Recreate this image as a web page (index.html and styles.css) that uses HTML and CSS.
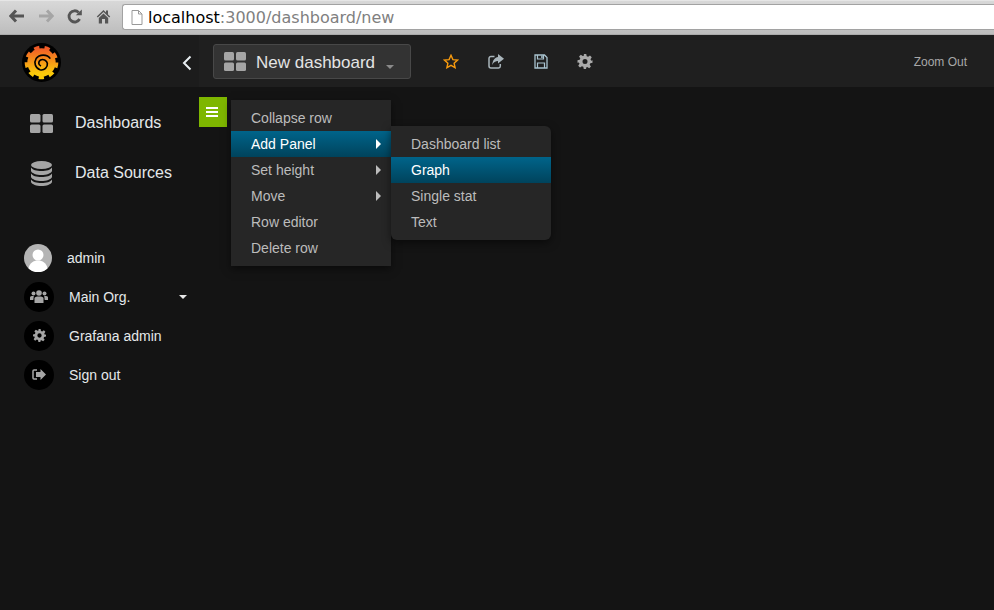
FILE: index.html
```html
<!DOCTYPE html>
<html lang="en">
<head>
  <meta charset="UTF-8" />
  <title>Grafana - New dashboard</title>
  <link rel="stylesheet" href="styles.css">
</head>
<body>

  <!-- browser toolbar -->
  <div class="browser-bar">
    <div class="browser-btns">
      <svg class="b-back" width="16" height="14" viewBox="0 0 16 14"><path d="M7 1.500 1.800 7 7 12.500M2 7h13" fill="none" stroke="#555" stroke-width="3"/></svg>
      <svg class="b-fwd" width="16" height="14" viewBox="0 0 16 14"><path d="M9 1.500 14.200 7 9 12.500M14 7H1" fill="none" stroke="#a5a5a5" stroke-width="3"/></svg>
      <svg class="b-reload" width="15" height="15" viewBox="0 0 15 15"><path d="M12.600 10A5.600 5.600 0 1 1 11.600 3.400" fill="none" stroke="#555" stroke-width="2.800"/><path d="M8.800 6.200h6V.4z" fill="#555"/></svg>
      <svg class="b-home" width="15" height="15" viewBox="0 0 15 15"><path d="M7.500 1 0.800 7.600l1 1L7.500 3l5.700 5.600 1-1-2.200-2.200V1.600H10v1.900z" fill="#555"/><path d="M2.800 9 7.500 4.400 12.200 9v5.500H9V10H6v4.500H2.800z" fill="#555"/></svg>
    </div>
    <div class="url-box">
      <svg width="12" height="15" viewBox="0 0 12 15"><path d="M1 .5h6.500L11 4v10.500H1z" fill="#fff" stroke="#999"/><path d="M7.500.5V4H11" fill="none" stroke="#999"/></svg>
      <span class="url-text"><b>localhost</b>:3000/dashboard/new</span>
    </div>
  </div>

  <!-- top nav -->
  <div class="navbar">
    <div class="brand">
      <svg class="logo" width="39" height="39" viewBox="0 0 40 40">
        <defs>
          <linearGradient id="logoGrad" gradientUnits="userSpaceOnUse" x1="0" y1="5" x2="0" y2="31">
            <stop offset="0" stop-color="#f05a28"/>
            <stop offset="1" stop-color="#fbca0a"/>
          </linearGradient>
        </defs>
        <circle cx="20" cy="20" r="20" fill="#000"/>
        <circle cx="20" cy="20" r="14.500" fill="url(#logoGrad)"/>
        <circle cx="20" cy="20" r="15.500" fill="none" stroke="url(#logoGrad)" stroke-width="3.500" stroke-dasharray="5.410 5.410"/>
        <path d="M29 16C26 11.500 18 11 14.500 16C12 20 13.500 26 18.500 27.500C23 28.500 26.500 25 26 21C25.500 17.500 21.500 16 19 17.500C16.500 19 16.500 22.500 19.500 23.500" fill="none" stroke="#000" stroke-width="1.700"/>
      </svg>
      <svg class="collapse" width="10" height="16" viewBox="0 0 10 16"><path d="M8.500 1.500 2 8l6.500 6.500" fill="none" stroke="#e8eef2" stroke-width="2"/></svg>
    </div>
    <div class="nav-main">
      <div class="dash-btn">
        <svg width="22" height="19" viewBox="0 0 22 19"><g fill="#a5a5a5"><rect width="10" height="8.500" rx="1.500"/><rect x="12" width="10" height="8.500" rx="1.500"/><rect y="10.500" width="10" height="8.500" rx="1.500"/><rect x="12" y="10.500" width="10" height="8.500" rx="1.500"/></g></svg>
        <span class="dash-title">New dashboard</span>
        <span class="caret caret-dim"></span>
      </div>
      <div class="nav-icons">
        <svg width="16" height="15" viewBox="0 0 16 15"><path d="M8 1.300 9.900 5.600l4.600.5-3.400 3.100 1 4.500L8 11.400l-4.100 2.300 1-4.500L1.500 6.100l4.600-.5z" fill="none" stroke="#f79a0e" stroke-width="1.400"/></svg>
        <svg width="16" height="15" viewBox="0 0 16 15"><path d="M6.500 2.500H3a2 2 0 0 0-2 2v7.500a2 2 0 0 0 2 2h7.500a2 2 0 0 0 1.800-2V10" fill="none" stroke="#a9b5bb" stroke-width="1.500"/><path d="M10 0l6 4.800-6 4.800V7C7.500 7 5.500 8 4.300 11 4.300 6.500 7 3.300 10 3z" fill="#a9b5bb"/></svg>
        <svg width="14" height="15" viewBox="0 0 14 15"><path d="M1 1h9.500L13 3.500V14H1z" fill="none" stroke="#a9c3cf" stroke-width="1.300"/><path d="M3.500 1v4h6V1M3.500 14V9h7v5" fill="none" stroke="#a9c3cf" stroke-width="1.200"/><rect x="7.200" y="1.500" width="1.500" height="2.600" fill="#a9c3cf"/></svg>
        <svg class="gear" width="15" height="15" viewBox="0 0 24 24"><path fill="#aaa" fill-rule="evenodd" d="M10 0h4l.7 3.500 2.300 1 3-2 2.800 2.800-2 3 1 2.300L24 10v4l-3.500.7-1 2.300 2 3-2.800 2.800-3-2-2.300 1L14 24h-4l-.7-3.500-2.300-1-3 2-2.800-2.800 2-3-1-2.300L0 14v-4l3.500-.7 1-2.300-2-3 2.800-2.800 3 2 2.300-1zM12 8a4 4 0 1 0 0 8 4 4 0 0 0 0-8z"/></svg>
      </div>
      <a class="zoom-out">Zoom Out</a>
    </div>
  </div>

  <div class="main">
    <div class="sidemenu">
      <ul class="side-links">
        <li>
          <svg width="23" height="19" viewBox="0 0 23 19"><g fill="#a5a5a5"><rect width="10.500" height="8.500" rx="1.500"/><rect x="12.500" width="10.500" height="8.500" rx="1.500"/><rect y="10.500" width="10.500" height="8.500" rx="1.500"/><rect x="12.500" y="10.500" width="10.500" height="8.500" rx="1.500"/></g></svg>
          Dashboards
        </li>
        <li>
          <svg width="23" height="25" viewBox="0 0 23 25"><g fill="#a5a5a5"><ellipse cx="11.500" cy="4" rx="10.500" ry="4"/><path d="M1 6.500c1.500 2.500 5.500 3.500 10.500 3.500S20.500 9 22 6.500V10c-1 2.500-5.500 4-10.500 4S2 12.500 1 10z"/><path d="M1 12.500c1.500 2.500 5.500 3.500 10.500 3.500s9-1 10.500-3.500V16c-1 2.500-5.500 4-10.500 4S2 18.500 1 16z"/><path d="M1 18.500c1.500 2.500 5.500 3.500 10.500 3.500s9-1 10.500-3.500V21c-1 2.500-5.500 4-10.500 4S2 23.500 1 21z"/></g></svg>
          Data Sources
        </li>
      </ul>
      <ul class="user-links">
        <li>
          <span class="avatar">
            <svg width="28" height="28" viewBox="0 0 28 28"><circle cx="14" cy="14" r="14" fill="#b4b4b4"/><circle cx="14" cy="11" r="5.500" fill="#fff"/><path d="M4.500 24.500c1-5.500 5-8 9.500-8s8.500 2.500 9.500 8a14 14 0 0 1-19 0z" fill="#fff"/></svg>
          </span>
          <span class="admin-name">admin</span>
        </li>
        <li>
          <span class="round-icon">
            <svg width="18" height="14" viewBox="0 0 18 14"><g fill="#a5a5a5"><circle cx="9" cy="3" r="2.800"/><circle cx="3.500" cy="3.500" r="2"/><circle cx="14.500" cy="3.500" r="2"/><path d="M4.500 13V8.500C4.500 7 6 6.500 9 6.500s4.500.5 4.500 2V13z"/><path d="M0 10V7.500C0 6.300 1.200 6 3.800 6L3.300 10zM18 10V7.500C18 6.300 16.800 6 14.200 6l.5 4z"/></g></svg>
          </span>
          Main Org.
          <span class="caret caret-white"></span>
        </li>
        <li>
          <span class="round-icon">
            <svg width="13" height="13" viewBox="0 0 24 24"><path fill="#a5a5a5" fill-rule="evenodd" d="M10 0h4l.7 3.500 2.300 1 3-2 2.800 2.800-2 3 1 2.300L24 10v4l-3.500.7-1 2.300 2 3-2.800 2.800-3-2-2.300 1L14 24h-4l-.7-3.500-2.300-1-3 2-2.800-2.800 2-3-1-2.300L0 14v-4l3.500-.7 1-2.300-2-3 2.800-2.800 3 2 2.300-1zM12 8a4 4 0 1 0 0 8 4 4 0 0 0 0-8z"/></svg>
          </span>
          Grafana admin
        </li>
        <li>
          <span class="round-icon">
            <svg width="14" height="11" viewBox="0 0 14 11"><path d="M5 1H2a1 1 0 0 0-1 1v7a1 1 0 0 0 1 1h3" fill="none" stroke="#a5a5a5" stroke-width="1.500"/><path d="M8.500 0 14 5.500 8.500 11V8H4V3h4.500z" fill="#a5a5a5"/></svg>
          </span>
          Sign out
        </li>
      </ul>
    </div>

    <div class="content">
      <div class="row-btn"><span></span><span></span><span></span></div>

      <ul class="menu row-menu">
        <li>Collapse row</li>
        <li class="active has-sub">Add Panel</li>
        <li class="has-sub">Set height</li>
        <li class="has-sub">Move</li>
        <li>Row editor</li>
        <li>Delete row</li>
      </ul>
      <ul class="menu sub-menu">
        <li>Dashboard list</li>
        <li class="active">Graph</li>
        <li>Single stat</li>
        <li>Text</li>
      </ul>
    </div>
  </div>

</body>
</html>
```

FILE: styles.css
```css
html, body {
  height: 100%;
}
body {
  margin: 0;
  display: flex;
  flex-direction: column;
  background: #141414;
  font-family: "Liberation Sans", Arial, sans-serif;
  font-size: 14px;
  color: #d8d9da;
  overflow: hidden;
}
ul {
  list-style: none;
  margin: 0;
  padding: 0;
}

/* browser toolbar */
.browser-bar {
  height: 35px;
  flex: none;
  box-sizing: border-box;
  display: flex;
  align-items: flex-start;
  background: linear-gradient(#d8d8d8, #bdbdbd);
  border-top: 1px solid #e6e6e6;
  border-bottom: 1px solid #aaa;
}
.browser-btns {
  width: 122px;
  height: 30px;
  display: flex;
  align-items: center;
}
.browser-btns svg {
  flex: none;
}
.b-back { margin-left: 9px; }
.b-fwd { margin-left: 13px; }
.b-reload { margin-left: 13px; }
.b-home { margin-left: 14px; }
.url-box {
  flex: 1;
  height: 26px;
  margin-top: 3px;
  box-sizing: border-box;
  display: flex;
  align-items: center;
  gap: 5px;
  padding-left: 8px;
  background: #fff;
  border: 1px solid #a2a2a2;
  border-right: none;
  border-radius: 3px 0 0 3px;
}
.url-text {
  font-family: "DejaVu Sans", sans-serif;
  font-size: 16px;
  color: #808080;
  white-space: nowrap;
}
.url-text b {
  font-weight: normal;
  color: #000;
}

/* top nav */
.navbar {
  height: 52px;
  flex: none;
  display: flex;
  background: #1f1f1f;
}
.brand {
  width: 199px;
  box-sizing: border-box;
  display: flex;
  align-items: center;
  justify-content: space-between;
  padding: 3px 7px 0 22px;
  background: #1c1c1c;
}
.nav-main {
  flex: 1;
  display: flex;
  align-items: center;
  padding: 1px 0 0 14px;
}
.dash-btn {
  width: 198px;
  height: 35px;
  box-sizing: border-box;
  display: flex;
  align-items: center;
  padding-left: 10px;
  background: #333;
  border: 1px solid #484848;
  border-radius: 3px;
}
.dash-title {
  margin: 2px 0 0 10px;
  font-size: 17px;
  color: #e4e4e4;
}
.caret {
  width: 0;
  height: 0;
  border-left: 4px solid transparent;
  border-right: 4px solid transparent;
}
.caret-dim {
  margin: 10px 0 0 11px;
  border-top: 4px solid #8a8a8a;
}
.caret-white {
  margin-left: auto;
  border-top: 4px solid #e8e8e8;
}
.nav-icons {
  display: flex;
  align-items: center;
  gap: 29px;
  margin-left: 32px;
}
.nav-icons svg {
  width: 16px;
}
.nav-icons .gear {
  margin-left: -1px;
}
.zoom-out {
  margin-left: auto;
  margin-right: 27px;
  font-size: 12px;
  color: #a8a8a8;
}

/* side menu */
.main {
  flex: 1;
  display: flex;
}
.sidemenu {
  width: 199px;
  flex: none;
  box-sizing: border-box;
  padding-top: 11px;
}
.side-links li {
  height: 50px;
  display: flex;
  align-items: center;
  padding-left: 30px;
  font-size: 16px;
  color: #e4e8ea;
}
.side-links svg {
  width: 23px;
  margin-right: 22px;
}
.user-links {
  margin-top: 40px;
  padding: 0 12px 0 24px;
}
.user-links li {
  height: 39px;
  display: flex;
  align-items: center;
  color: #e4e8ea;
}
.avatar {
  width: 28px;
  height: 28px;
  margin-right: 15px;
  display: flex;
}
.round-icon {
  width: 30px;
  height: 30px;
  margin-right: 15px;
  display: flex;
  align-items: center;
  justify-content: center;
  border-radius: 50%;
  background: #000;
}

/* row + dropdowns */
.content {
  flex: 1;
  position: relative;
}
.row-btn {
  width: 28px;
  height: 30px;
  margin-top: 10px;
  padding-right: 2px;
  box-sizing: border-box;
  display: flex;
  flex-direction: column;
  align-items: center;
  justify-content: center;
  gap: 2px;
  background: #7eb600;
}
.row-btn span {
  width: 12px;
  height: 2px;
  background: #fff;
}
.menu {
  position: absolute;
  padding: 5px 0;
  background: #262626;
  box-shadow: 0 3px 8px rgba(0, 0, 0, 0.5);
}
.menu li {
  height: 26px;
  line-height: 26px;
  padding-left: 20px;
  color: #bcbcbc;
  position: relative;
}
.menu li.active {
  color: #fff;
  background: linear-gradient(#00648a, #00435c);
}
.menu li.has-sub::after {
  content: "";
  position: absolute;
  right: 10px;
  top: 8px;
  border-left: 5px solid #bcbcbc;
  border-top: 5px solid transparent;
  border-bottom: 5px solid transparent;
}
.menu li.active.has-sub::after {
  border-left-color: #fff;
}
.row-menu {
  left: 32px;
  top: 13px;
  width: 160px;
}
.sub-menu {
  left: 192px;
  top: 39px;
  width: 160px;
  border-radius: 0 6px 6px 6px;
}
```
